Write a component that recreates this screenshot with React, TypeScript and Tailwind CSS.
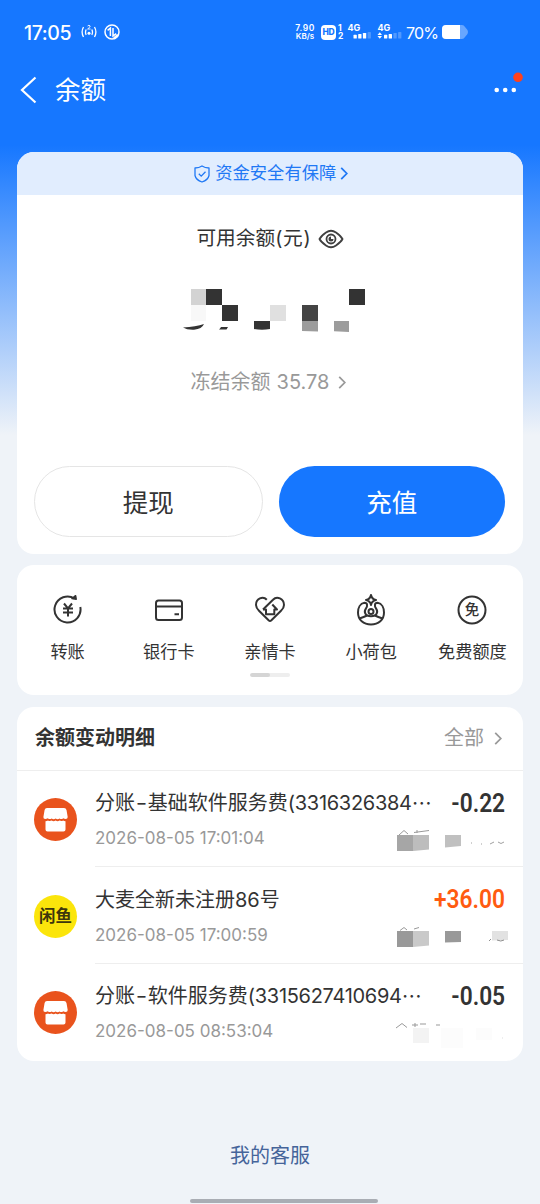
import type { ReactNode } from "react";

type RecordItem = {
  kind: "shop" | "xianyu";
  title: string;
  suffix?: string;
  time: string;
  amount: string;
  income?: boolean;
  mask: ReactNode;
};

const records: RecordItem[] = [
  {
    kind: "shop",
    title: "分账-基础软件服务费",
    suffix: "(3316326384",
    time: "2026-08-05 17:01:04",
    amount: "-0.22",
    mask: (
      <>
        <path d="M3 8 L8 3.500 L12 7 M18 5.500 L33 3.500 M21 3 v3" stroke="#999" fill="none" />
        <path d="M1 8h16v16H1z" fill="#a6a6a6" />
        <path d="M17 8h16v14.500L17 24z" fill="#bdbdbd" />
        <path d="M49 8h16v11l-16 1.500z" fill="#c0c0c0" />
        <path d="M75 16h1M85 17h1M94 17l4-2M102 15q3 3 6 0" stroke="#a0a0a0" fill="none" />
      </>
    ),
  },
  {
    kind: "xianyu",
    title: "大麦全新未注册86号",
    time: "2026-08-05 17:00:59",
    amount: "+36.00",
    income: true,
    mask: (
      <>
        <path d="M4 7.500 L8 4.500 L11 7 M18 6 L23 4.500" stroke="#999" fill="none" />
        <path d="M1 8h16v16H1z" fill="#999" />
        <path d="M17 8h16v14.500L17 24z" fill="#c9c9c9" />
        <path d="M49 8h16v11l-16 .5z" fill="#999" />
        <path d="M96 8h16v9l-16 .5z" fill="#e2e2e2" />
        <path d="M93 18l2-2M101 17q4 2 7 0" stroke="#8e8e8e" fill="none" />
      </>
    ),
  },
  {
    kind: "shop",
    title: "分账-软件服务费",
    suffix: "(3315627410694",
    time: "2026-08-05 08:53:04",
    amount: "-0.05",
    mask: (
      <>
        <path d="M0 8 L6 3.500 L11 7.500 M16 5h6M19 3v4M24 4h6M40 5l4 0" stroke="#999" fill="none" />
        <path d="M17 8h16v15H17z" fill="#f3f3f3" />
        <path d="M45 8h22v20H45zM80 8h16v12H80z" fill="#fcfcfc" />
        <path d="M106 18h1" stroke="#ddd" />
      </>
    ),
  },
];

function Chevron({ className }: { className?: string }) {
  return (
    <svg viewBox="0 0 8 14" fill="none" stroke="currentColor" strokeWidth="1.9" className={className}>
      <path d="M1 1l6 6-6 6" />
    </svg>
  );
}

function Signal({ active, x }: { active: number; x: number }) {
  return (
    <>
      {[0, 1, 2, 3].map((i) => (
        <rect
          key={i}
          x={x + i * 4.7}
          y={11.800 - i * 0.9}
          width="3.300"
          height={3.8 + i * 0.9}
          rx="0.6"
          fill="#fff"
          opacity={i < active ? 1 : 0.25}
        />
      ))}
    </>
  );
}

function StatusBar() {
  return (
    <div className="flex h-16 items-center pl-[24px] text-white">
      <span className="w-[57px] pt-[3px] text-[19.500px] font-medium leading-none tracking-[-0.4px]">17:05</span>
      <svg width="16" height="16" viewBox="0 0 16 16" fill="none" stroke="#fff" strokeWidth="1.300">
        <path d="M2.500 3q-2.800 5 0 10M5.200 5.500q-1.400 2.700 0 5.400M13.500 3q2.800 5 0 10M10.800 5.500q1.400 2.700 0 5.400" />
        <circle cx="8" cy="9.300" r="1.500" fill="#fff" stroke="none" />
        <path d="M6.600 2q1.400-1.500 2.600 0 0 1.200-2.600 3h3" strokeWidth="0.9" />
      </svg>
      <svg className="ml-[7px]" width="16" height="16" viewBox="0 0 16 16" fill="none" stroke="#fff" strokeWidth="1.500">
        <circle cx="8" cy="8" r="7" />
        <path d="M3.600 6.300L6.400 4v8M9 4v8l3.200-2.400" />
        <path d="M14 11l-4 3.500" strokeWidth="2.500" />
      </svg>
      <div className="ml-[174px] w-[22px] whitespace-nowrap text-center text-[8.500px] font-semibold leading-[8px]">
        <div className="tracking-[0.5px]">7.90</div>
        <div className="text-[8px]">KB/s</div>
      </div>
      <div className="ml-[5px] flex h-[15px] w-[15px] items-center justify-center rounded-[4px] bg-white text-[8.500px] font-extrabold leading-none tracking-[-0.3px] text-[#1677ff]">
        HD
      </div>
      <div className="ml-[2px] w-[5px] text-[8.500px] font-bold leading-[8px]">
        <div>1</div>
        <div>2</div>
      </div>
      <svg className="ml-[4px]" width="57" height="18" viewBox="0 0 57 18">
        <text x="0.5" y="8" fill="#fff" fontSize="9" fontWeight="700" fontFamily="Inter">4G</text>
        <Signal x={6.5} active={3} />
        <text x="30.500" y="8" fill="#fff" fontSize="9" fontWeight="700" fontFamily="Inter">4G</text>
        <path d="M30.500 12l2.300-2.700L35 12zM30.500 13h4.500l-2.200 2.700z" fill="#fff" />
        <Signal x={37} active={2} />
      </svg>
      <span className="ml-[2px] w-[36px] whitespace-nowrap pt-px text-[16px] leading-none tracking-[-0.8px]">70%</span>
      <svg width="27" height="14" viewBox="0 0 27 14">
        <path d="M4 0h16q2 0 3 2l2.500 3q1 2 0 4L23 12q-1 2-3 2H4q-4 0-4-4V4q0-4 4-4z" fill="#fff" opacity="0.35" />
        <path d="M4 0h14v14H4q-4 0-4-4V4q0-4 4-4z" fill="#fff" />
      </svg>
    </div>
  );
}

function NavBar() {
  return (
    <div className="flex h-[52px] items-center pl-[19.500px] pr-[16px] text-white">
      <svg width="17" height="28" viewBox="0 0 17 28" fill="none" stroke="#fff" strokeWidth="2.200">
        <path d="M15.500 1.500L2 14l13.500 12.500" />
      </svg>
      <h1 className="ml-[18.500px] text-[25.500px] leading-none">余额</h1>
      <svg className="ml-auto overflow-visible" width="32" height="28" viewBox="0 0 32 28">
        <circle cx="4.700" cy="14" r="2.300" fill="#fff" />
        <circle cx="13.200" cy="14" r="2.300" fill="#fff" />
        <circle cx="21.800" cy="14" r="2.300" fill="#fff" />
        <circle cx="26" cy="1.300" r="4.800" fill="#ff411c" />
      </svg>
    </div>
  );
}

function BalanceCard() {
  return (
    <section className="h-[402px] overflow-hidden rounded-[17px] bg-white">
      <div className="flex h-[43px] items-center justify-center bg-[#e1edfe] pl-[2px] text-[#1f78f5]">
        <svg width="16" height="18" viewBox="0 0 16 18" fill="none" stroke="currentColor" strokeWidth="1.300">
          <path d="M8 1q3 2 7 2v7.500q-1 4.500-7 6.500-6-2-7-6.500V3q4 0 7-2z" strokeLinejoin="round" />
          <path d="M4.800 8.800l2.400 2.400 4.300-4.400" />
        </svg>
        <span className="ml-[5.500px] pb-px text-[17.300px] leading-none">资金安全有保障</span>
        <Chevron className="ml-[4px] h-[13px] w-[8px]" />
      </div>
      <div className="mt-[33px] flex h-[22px] items-center justify-center text-[#333]">
        <span className="text-[19.700px] leading-none">
          可用余额<span className="tracking-[0.8px]">(元)</span>
        </span>
        <svg className="ml-[6px]" width="26" height="20" viewBox="0 0 26 20" fill="none" stroke="#404040" strokeWidth="1.800">
          <path d="M1.500 10Q3 7 8 3.500q5-3.500 10 0Q23 7 24.500 10 23 13 18 16.500q-5 3.500-10 0Q3 13 1.500 10z" />
          <circle cx="13" cy="10" r="4.500" />
          <path d="M13 7.500v2.500h2.500a2.500 2.500 0 1 1-2.500-2.500z" fill="#404040" stroke="none" />
        </svg>
      </div>
      {/* obscured balance */}
      <svg className="mx-auto mt-[39px] block" width="190" height="44" viewBox="0 0 190 44">
        <path d="M16 0h15v16H16z" fill="#d3d3d3" />
        <path d="M31 0h16v16H31zM47 16h16v16H47zM174 0h16v16h-16z" fill="#333" />
        <path d="M16 16h15v16H16z" fill="#f8f8f8" />
        <path d="M95 16h16v16H95z" fill="#e0e0e0" />
        <path d="M127 16h16v16h-16z" fill="#444" />
        <path d="M127 32h16v10.500l-16-.5z" fill="#9c9c9c" />
        <path d="M159 32h15v11l-15-.7z" fill="#9c9c9c" />
        <path d="M79 32h16v8q-8 1.500-16 0z" fill="#333" />
        <path d="M8 38.500q13-1 21-3.500-2 5-10 5.700-7 .3-11-2.200zM45 39.500l1-1.500h7l-1.500 2.500H44z" fill="#333" />
      </svg>
      <div className="mt-[38px] flex h-[22px] items-center justify-center pr-[3px] text-[#999]">
        <span className="text-[20px] leading-none">冻结余额</span>
        <span className="ml-[6px] text-[20px] leading-none">35.78</span>
        <Chevron className="ml-[9px] h-[13px] w-[8px]" />
      </div>
      <div className="mt-[73px] flex gap-[16px] pl-[17px] pr-[18px] text-[25.500px]">
        <button className="h-[71px] flex-1 rounded-full border-[1.500px] border-[#e5e5e5] pt-[3px] text-[#333]">提现</button>
        <button className="h-[71px] flex-1 rounded-full bg-[#1677ff] pt-[3px] text-white">充值</button>
      </div>
    </section>
  );
}

const services = [
  {
    name: "转账",
    icon: (
      <>
        <path d="M22.500 4.500A13 13 0 1 0 28.300 13" />
        <path d="M20 4.500l4.200.7-.6-3.500z" fill="#333" strokeWidth="1.500" />
        <path d="M12 9.500l4 4.800 4-4.800M16 14.300V22.500M11 14.500h10M11 18.500h10" />
      </>
    ),
  },
  {
    name: "银行卡",
    icon: (
      <>
        <rect x="3" y="6.500" width="26" height="19.500" rx="2.500" />
        <path d="M3 12.500h26M21.500 20.300h4.500" />
      </>
    ),
  },
  {
    name: "亲情卡",
    icon: (
      <>
        <path d="M12.800 5.700C9 1.800 1.800 4.500 2 11c.1 2.400 1.200 4 3 5.700l9.600 9.600q1.400 1.300 2.800 0l9.600-9.600C28.900 15 30 13.400 30 11c0-6.500-7.200-9.200-11-5.300L9 15.500" />
        <path d="M9 15.500h3v4.800h8.300v-4.800H23l-4.700-5" />
      </>
    ),
  },
  {
    name: "小荷包",
    icon: (
      <>
        <path d="M16 1q.8 4.200 5 5-4.200.8-5 5-.8-4.200-5-5 4.200-.8 5-5z" />
        <path d="M9.500 8.800C5 9.500 3 14 3 18.500 3 26 8.500 30.500 16 30.500S29 26 29 18.500c0-4.500-2-9-6.500-9.700-3.300 0-3 3.500-1.500 5.500 2.500 3.500 1 8-5 8s-7.500-4.500-5-8c1.500-2 1.800-5.500-1.500-5.500z" />
        <circle cx="16" cy="17.500" r="2.500" />
        <path d="M4.500 24.500q4.500-1.500 7.500-3M27.500 24.500q-4.500-1.500-7.500-3" />
      </>
    ),
  },
  {
    name: "免费额度",
    icon: (
      <>
        <circle cx="16" cy="16" r="13.500" />
        <text x="16" y="21.300" textAnchor="middle" fontSize="14.500" fontWeight="500" fontFamily="Noto Sans CJK SC" fill="#333" stroke="none">
          免
        </text>
      </>
    ),
  },
];

function ServiceCard() {
  return (
    <section className="mt-[11px] h-[130px] rounded-[17px] bg-white pt-[29px]">
      <div className="grid grid-cols-5">
        {services.map((s) => (
          <div key={s.name} className="flex flex-col items-center text-[#333]">
            <svg width="32" height="32" viewBox="0 0 32 32" fill="none" stroke="#333" strokeWidth="2" strokeLinejoin="round">
              {s.icon}
            </svg>
            <span className="mt-[17px] whitespace-nowrap text-[17.200px] leading-[18px]">{s.name}</span>
          </div>
        ))}
      </div>
      <div className="mx-auto mt-[12px] h-[4px] w-[40px] overflow-hidden rounded-full bg-[#eee]">
        <div className="h-full w-1/2 rounded-full bg-[#d5d5d5]" />
      </div>
    </section>
  );
}

function Avatar({ kind }: { kind: RecordItem["kind"] }) {
  if (kind === "xianyu") {
    return (
      <div className="flex h-[43px] w-[43px] items-center justify-center rounded-full bg-[#fbe50b] text-[16.500px] font-bold leading-none text-[#3d370c]">
        闲鱼
      </div>
    );
  }
  return (
    <svg width="43" height="43" viewBox="0 0 43 43">
      <circle cx="21.500" cy="21.500" r="21.500" fill="#e9531d" />
      <path
        d="M13 10h17q2 0 2.500 2l1.200 7q0 2-2 2-1.500 0-2.500-.8-1.600 1.600-3.700.4-1.800 1.400-3.900 0-2 1.400-4 0-2 1.200-3.800-.4-1.200.8-2.600.8-2 0-1.800-2l1.200-7q.4-2 2.400-2z"
        fill="#fff"
      />
      <path
        d="M11.500 23.200q1.600 0 2.500-.7 1.800 1 3.600.1 2 1.400 4 0 2 1.400 4 0 1.800.9 3.500-.1.900.7 2.400.7V31.500q0 2-2 2h-16q-2 0-2-2z"
        fill="#fff"
      />
    </svg>
  );
}

function RecordRow({ item, last }: { item: RecordItem; last: boolean }) {
  const [head, tail] = item.title.split("-");

  return (
    <li className="flex h-[96.700px] pl-[17px]">
      <div className="mt-[27.500px] w-[61px] shrink-0">
        <Avatar kind={item.kind} />
      </div>
      <div className={`min-w-0 flex-1 pt-[19.500px] ${last ? "" : "border-b-[1.500px] border-[#eee]"}`}>
        <div className="flex h-[26px] items-center justify-between pr-[18px]">
          <div className="flex items-center whitespace-nowrap text-[20px] leading-none text-[#333]">
            <span>{head}</span>
            {tail && (
              <>
                <span className="mx-px inline-block scale-x-125 px-[0.8px]">-</span>
                <span>{tail}</span>
              </>
            )}
            {item.suffix && (
              <>
                <span className="tracking-[-0.3px]">{item.suffix}</span>
                <span className="font-['Noto_Sans_CJK_SC',sans-serif]">…</span>
              </>
            )}
          </div>
          <span
            className={`origin-right scale-x-[0.91] font-['Roboto',sans-serif] text-[25px] font-semibold leading-none ${
              item.income ? "text-[#ff5b10]" : "text-[#333]"
            }`}
          >
            {item.amount}
          </span>
        </div>
        <div className="flex h-[28px] items-start justify-between">
          <span className="mt-[14px] whitespace-nowrap text-[17px] leading-none text-[#999]">{item.time}</span>
          <svg className="mt-[10.500px] shrink-0" width="127" height="30" viewBox="0 0 127 30">
            {item.mask}
          </svg>
        </div>
      </div>
    </li>
  );
}

export default function App() {
  return (
    <div className="flex h-[1204px] w-[540px] flex-col overflow-hidden bg-[#eff3f8] bg-[linear-gradient(180deg,#1677ff_0px,#1677ff_145px,#eff3f8_435px)] font-['Inter','Noto_Sans_CJK_SC',sans-serif]">
      <StatusBar />
      <NavBar />
      <main className="mt-[36px] px-[17px]">
        <BalanceCard />
        <ServiceCard />
        <section className="mt-[11.500px] h-[354px] rounded-[17px] bg-white">
          <div className="flex h-[64px] items-center justify-between border-b-[1.500px] border-[#eee] pl-[18px] pr-[21px]">
            <h2 className="text-[20px] font-bold leading-none text-[#333]">余额变动明细</h2>
            <div className="flex items-center text-[#999]">
              <span className="text-[20px] leading-none">全部</span>
              <Chevron className="ml-[10px] h-[13px] w-[8px]" />
            </div>
          </div>
          <ul>
            {records.map((item, i) => (
              <RecordRow key={item.time} item={item} last={i === records.length - 1} />
            ))}
          </ul>
        </section>
      </main>
      <a className="mt-[84px] text-center text-[20px] leading-[22px] text-[#45649a]">我的客服</a>
      <div className="mx-auto mt-[32px] h-[4px] w-[188px] translate-x-[14px] rounded-full bg-[#a9adb4]" />
    </div>
  );
}
